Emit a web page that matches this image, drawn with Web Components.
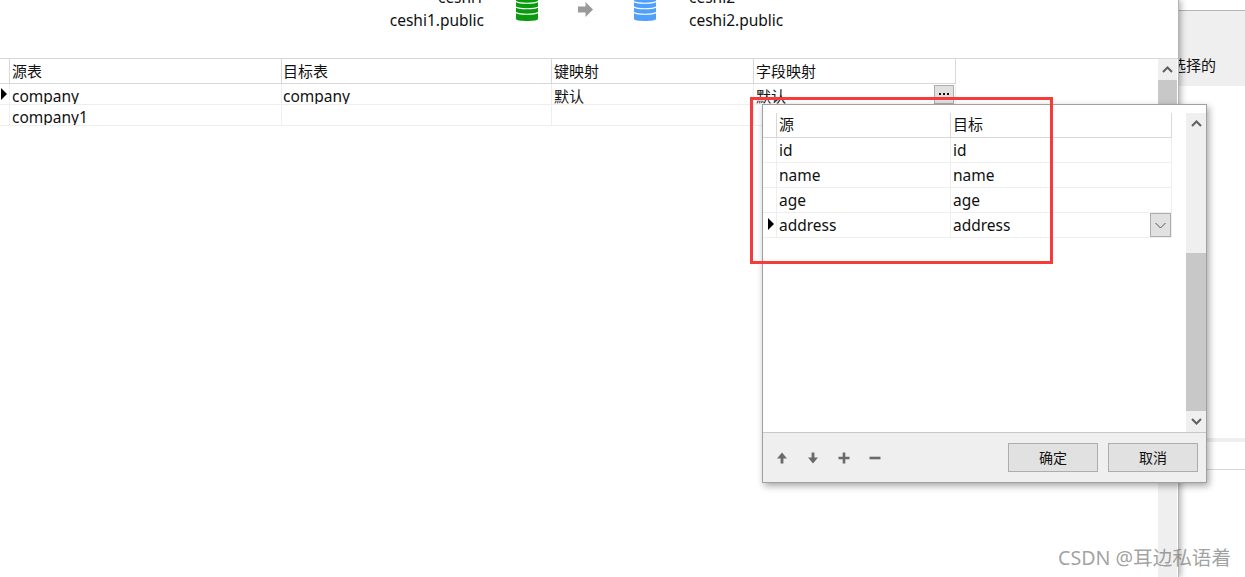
<!DOCTYPE html>
<html lang="zh">
<head>
<meta charset="utf-8">
<title>结构同步</title>
<style>
html,body{margin:0;height:100%;overflow:hidden;background:#fff;}
body{font:15px "Noto Sans","Noto Sans CJK SC",sans-serif;color:#111;}
</style>
</head>
<body>
<sync-app>
  <sync-window>
    <sync-header slot="header"></sync-header>
    <data-grid style="--cols:10px 272px 270px 202px 202px;--row-h:21px;--head-h:25px;--drop:3px;--head-lift:2px;">
      <grid-row kind="header"><grid-cell></grid-cell><grid-cell>源表</grid-cell><grid-cell style="--pl:1px">目标表</grid-cell><grid-cell>键映射</grid-cell><grid-cell>字段映射</grid-cell></grid-row>
      <grid-row current><grid-cell></grid-cell><grid-cell latin>company</grid-cell><grid-cell latin style="--pl:1px">company</grid-cell><grid-cell>默认</grid-cell><grid-cell>默认<more-button slot="end"></more-button></grid-cell></grid-row>
      <grid-row><grid-cell></grid-cell><grid-cell latin>company1</grid-cell><grid-cell></grid-cell><grid-cell></grid-cell><grid-cell></grid-cell></grid-row>
    </data-grid>
    <scroll-bar slot="scroll" open-end style="--thumb-top:0px;--thumb-h:300px;"></scroll-bar>
  </sync-window>
  <side-panel>选择的</side-panel>
</sync-app>

<map-popup>
  <data-grid style="--cols:14px 174px 221px;--row-h:25px;--head-h:25px;--drop:0px;--head-lift:4px;">
    <grid-row kind="header"><grid-cell></grid-cell><grid-cell>源</grid-cell><grid-cell>目标</grid-cell></grid-row>
    <grid-row><grid-cell></grid-cell><grid-cell latin>id</grid-cell><grid-cell latin>id</grid-cell></grid-row>
    <grid-row><grid-cell></grid-cell><grid-cell latin>name</grid-cell><grid-cell latin>name</grid-cell></grid-row>
    <grid-row><grid-cell></grid-cell><grid-cell latin>age</grid-cell><grid-cell latin>age</grid-cell></grid-row>
    <grid-row current><grid-cell></grid-cell><grid-cell latin>address</grid-cell><grid-cell latin>address<drop-button slot="end"></drop-button></grid-cell></grid-row>
  </data-grid>
</map-popup>

<red-frame></red-frame>
<water-mark>CSDN @耳边私语着</water-mark>

<script>
class SyncApp extends HTMLElement{
    constructor(){
        super();
        this.attachShadow({mode:"open"}).innerHTML=`
        <style>
        :host{display:flex;height:577px;}
        </style>
        <slot></slot>`;
    }
}

class SyncWindow extends HTMLElement{
    constructor(){
        super();
        this.attachShadow({mode:"open"}).innerHTML=`
        <style>
        :host{display:flex;flex-direction:column;width:1178px;flex:none;height:577px;
            border-right:1px solid #b4b4b4;box-shadow:2px 0 6px rgba(0,0,0,.3);position:relative;z-index:1;background:#fff;}
        .body{display:flex;flex:1;min-height:0;border-top:1px solid #d8d8d8;padding-right:1px;}
        .grid{flex:1;min-width:0;}
        </style>
        <slot name="header"></slot>
        <div class="body"><div class="grid"><slot></slot></div><slot name="scroll"></slot></div>`;
    }
}

class SyncHeader extends HTMLElement{
    constructor(){
        super();
        // database drum: solid body, white arcs between the discs
        const db=(c)=>`<svg width="22" height="22" viewBox="0 0 22 22"><path fill="${c}" d="M0-4h22v23c0 1.300-5 2-11 2S0 20.300 0 19z"/><path fill="none" stroke="#fff" stroke-width="1.100" d="M0 1.500C2 2.800 6 3.300 11 3.300s9-.5 11-1.800M0 7C2 8.300 6 8.800 11 8.800s9-.5 11-1.800M0 12.500c2 1.300 6 1.800 11 1.800s9-.5 11-1.800"/></svg>`;
        this.attachShadow({mode:"open"}).innerHTML=`
        <style>
        :host{display:flex;height:58px;overflow:hidden;flex:none;}
        .names{display:flex;flex-direction:column;margin-top:-15px;line-height:23px;height:46px;font-size:15.5px;padding-top:1px;}
        .src{width:484px;text-align:right;margin-right:32px;}
        .dst{margin-left:33px;}
        svg{display:block;flex:none;}
        .arrow{margin:2px 41px 0 40px;}
        </style>
        <div class="names src"><span>ceshi1</span><span>ceshi1.public</span></div>
        ${db("#0a9a0e")}
        <svg class="arrow" width="15" height="15" viewBox="0 0 15 15"><path fill="#9a9a9a" d="M0 4.500h7.500V0L15 7.500 7.500 15v-4.500H0z"/></svg>
        ${db("#4f9ffb")}
        <div class="names dst"><span>ceshi2</span><span>ceshi2.public</span></div>`;
    }
}

class DataGrid extends HTMLElement{
    constructor(){
        super();
        this.attachShadow({mode:"open"}).innerHTML=`
        <style>
        :host{display:block;}
        </style>
        <slot></slot>`;
    }
}

class GridRow extends HTMLElement{
    constructor(){
        super();
        this.attachShadow({mode:"open"}).innerHTML=`
        <style>
        :host{display:grid;grid-template-columns:var(--cols);height:var(--row-h);box-sizing:border-box;
            border-bottom:1px solid #eeeeee;width:max-content;position:relative;--line:#eeeeee;--shift:var(--drop);--lift:0px;}
        :host([kind="header"]){height:var(--head-h);border-bottom-color:#d8d8d8;--line:#d8d8d8;--shift:0px;--lift:var(--head-lift);}
        :host([current])::before{content:"";position:absolute;left:var(--tri-left,1px);top:var(--tri-top,4px);width:0;height:0;
            border-left:6px solid #000;border-top:6px solid transparent;border-bottom:6px solid transparent;}
        </style>
        <slot></slot>`;
    }
}

class GridCell extends HTMLElement{
    constructor(){
        super();
        this.attachShadow({mode:"open"}).innerHTML=`
        <style>
        :host{display:flex;align-items:center;box-sizing:border-box;border-right:1px solid var(--line);
            padding:var(--shift) 0 var(--lift) var(--pl,2px);overflow:hidden;white-space:nowrap;min-width:0;height:100%;}
        :host([latin]){font-size:15.5px;}
        .txt{flex:1;min-width:0;}
        </style>
        <span class="txt"><slot></slot></span><slot name="end"></slot>`;
    }
}

class MoreButton extends HTMLElement{
    constructor(){
        super();
        this.attachShadow({mode:"open"}).innerHTML=`
        <style>
        :host{flex:none;box-sizing:border-box;width:20px;height:19px;margin:-3px 1px 0 0;background:#e1e1e1;
            border:1px solid #adadad;display:flex;align-items:center;justify-content:center;gap:2px;}
        i{width:2px;height:2px;background:#111;display:block;}
        </style>
        <i></i><i></i><i></i>`;
    }
}

class DropButton extends HTMLElement{
    constructor(){
        super();
        this.attachShadow({mode:"open"}).innerHTML=`
        <style>
        :host{flex:none;box-sizing:border-box;width:21px;height:24px;background:#e1e1e1;border:1px solid #adadad;
            display:flex;align-items:center;justify-content:center;}
        </style>
        <svg width="11" height="7" viewBox="0 0 11 7"><path d="M.5 1l5 5 5-5" fill="none" stroke="#555"/></svg>`;
    }
}

class ScrollBar extends HTMLElement{
    constructor(){
        super();
        this.attachShadow({mode:"open"}).innerHTML=`
        <style>
        :host{display:flex;flex-direction:column;flex:none;width:19px;background:#efefef;}
        :host([open-end]) .down{display:none;}
        .btn{height:21px;flex:none;display:flex;align-items:center;justify-content:center;}
        .track{flex:1;min-height:0;padding-top:var(--thumb-top);}
        .thumb{height:var(--thumb-h);background:#c8c8c8;}
        svg{display:block;}
        </style>
        <div class="btn"><svg width="11" height="7" viewBox="0 0 11 7"><path d="M1 6l4.500-4.500L10 6" fill="none" stroke="#606060" stroke-width="2"/></svg></div>
        <div class="track"><div class="thumb"></div></div>
        <div class="btn down"><svg width="11" height="7" viewBox="0 0 11 7"><path d="M1 1l4.500 4.500L10 1" fill="none" stroke="#606060" stroke-width="2"/></svg></div>`;
    }
}

class SidePanel extends HTMLElement{
    constructor(){
        super();
        this.attachShadow({mode:"open"}).innerHTML=`
        <style>
        :host{display:flex;flex-direction:column;flex:1;min-width:0;overflow:hidden;background:#fff;padding-top:10px;}
        .top{height:75px;flex:none;background:#efefef;border-top:1px solid #b4b4b4;display:flex;align-items:flex-end;}
        .top span{margin:0 0 10px -8px;line-height:22px;white-space:nowrap;}
        .band{height:4px;background:#efefef;margin-top:352px;flex:none;}
        .line{height:1px;background:#d8d8d8;margin-top:27px;flex:none;}
        </style>
        <div class="top"><span><slot></slot></span></div>
        <div class="band"></div>
        <div class="line"></div>`;
    }
}

class MapPopup extends HTMLElement{
    constructor(){
        super();
        this.attachShadow({mode:"open"}).innerHTML=`
        <style>
        :host{position:absolute;left:762px;top:104px;width:445px;height:379px;box-sizing:border-box;z-index:2;
            display:flex;flex-direction:column;background:#fff;border:1px solid #a0a0a0;
            box-shadow:2px 3px 7px rgba(0,0,0,.35);--tri-left:5px;--tri-top:5px;}
        .body{display:flex;flex:1;min-height:0;padding-top:8px;}
        .grid{flex:1;min-width:0;}
        foot-bar{flex:none;}
        </style>
        <div class="body">
            <div class="grid"><slot></slot></div>
            <scroll-bar style="--thumb-top:119px;--thumb-h:158px;width:20px;"></scroll-bar>
        </div>
        <foot-bar></foot-bar>`;
    }
}

class FootBar extends HTMLElement{
    constructor(){
        super();
        this.attachShadow({mode:"open"}).innerHTML=`
        <style>
        :host{display:flex;align-items:center;height:50px;box-sizing:border-box;background:#efefef;
            border-top:1px solid #c8c8c8;padding:0 8px 0 13px;}
        svg{display:block;flex:none;}
        .icons{display:flex;gap:19px;align-items:center;margin-top:1px;flex:1;}
        .btn{box-sizing:border-box;width:90px;height:29px;background:#e1e1e1;border:1px solid #adadad;color:#111;
            display:flex;align-items:center;justify-content:center;font-size:14px;margin-left:10px;padding-bottom:2px;}
        </style>
        <div class="icons">
            <svg width="12" height="12" viewBox="0 0 12 12"><path fill="#6a6a6a" d="M6 .5l5 6H7.400V11.500H4.600V6.500H1z"/></svg>
            <svg width="12" height="12" viewBox="0 0 12 12"><path fill="#6a6a6a" d="M6 11.500l-5-6h3.600V.5h2.800v5H11z"/></svg>
            <svg width="12" height="12" viewBox="0 0 12 12"><path fill="#6a6a6a" d="M4.700.5h2.600v4.200h4.200v2.600H7.300v4.200H4.700V7.300H.5V4.700h4.200z"/></svg>
            <svg width="12" height="12" viewBox="0 0 12 12"><path fill="#6a6a6a" d="M.5 4.700h11v2.600H.5z"/></svg>
        </div>
        <div class="btn">确定</div>
        <div class="btn">取消</div>`;
    }
}

class RedFrame extends HTMLElement{
    constructor(){
        super();
        this.attachShadow({mode:"open"}).innerHTML=`
        <style>
        :host{position:absolute;left:750px;top:97px;width:303px;height:167px;box-sizing:border-box;
            border:3px solid #f73b3b;z-index:3;pointer-events:none;}
        </style>`;
    }
}

class WaterMark extends HTMLElement{
    constructor(){
        super();
        this.attachShadow({mode:"open"}).innerHTML=`
        <style>
        :host{position:absolute;left:1058px;top:544px;z-index:4;font-size:19.600px;line-height:28px;color:rgba(120,120,120,.7);white-space:nowrap;}
        </style>
        <slot></slot>`;
    }
}

customElements.define("sync-app",SyncApp);
customElements.define("sync-window",SyncWindow);
customElements.define("sync-header",SyncHeader);
customElements.define("data-grid",DataGrid);
customElements.define("grid-row",GridRow);
customElements.define("grid-cell",GridCell);
customElements.define("more-button",MoreButton);
customElements.define("drop-button",DropButton);
customElements.define("scroll-bar",ScrollBar);
customElements.define("side-panel",SidePanel);
customElements.define("map-popup",MapPopup);
customElements.define("foot-bar",FootBar);
customElements.define("red-frame",RedFrame);
customElements.define("water-mark",WaterMark);
</script>
</body>
</html>
